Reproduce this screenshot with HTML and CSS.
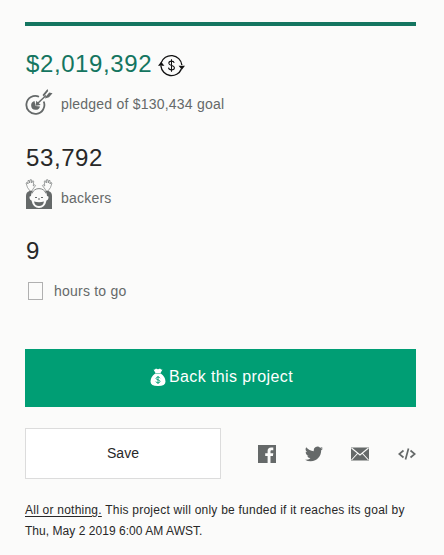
FILE: index.html
```html
<!DOCTYPE html>
<html lang="en">
<head>
    <meta charset="UTF-8">
    <meta name="viewport" content="width=device-width, initial-scale=1.0">
    <title>Back this project</title>
    <link rel="stylesheet" href="styles.css">
</head>
<body>
    <div class="container">
        <div class="progress-bar"></div>

        <div class="stat">
            <div class="stat-value pledged">
                <span>$2,019,392</span>
                <svg class="convert-icon" viewBox="0 0 26 24">
                    <path d="M3 9.500A10.300 10.300 0 0 1 23 11.500M22.500 15.500A10.300 10.300 0 0 1 2.800 12.500" fill="none" stroke="#111" stroke-width="1.300"/>
                    <path d="M0 12.300L3 8.500l3.200 3.800zM19.800 12.200H26l-3 3.800z" fill="#111"/>
                    <path d="M15.600 9.500C15.300 8.300 14.400 7.800 13 7.800c-1.500 0-2.600.7-2.600 2 0 2.800 5.400 1.400 5.400 4.300 0 1.400-1.200 2.100-2.800 2.100s-2.700-.8-2.900-2.100M13 6v12" fill="none" stroke="#111" stroke-width="1"/>
                </svg>
            </div>
            <div class="stat-label">
                <svg class="target-icon" viewBox="0 0 28 28">
                    <path d="M14 8.700A9 9 0 1 0 18.700 13.500" fill="none" stroke="#656969" stroke-width="1.800"/>
                    <path d="M12 16l9-8.500" fill="none" stroke="#656969" stroke-width="1.500"/>
                    <path d="M17.500 7L22.500 1l.7 2-4.400 5.500zM20.500 9l3.700-4.500 3.300.7-3.500 4-4 1.300z" fill="#656969"/>
                    <path d="M9.500 13a4.500 4.500 0 1 0 5.500 5.500l-4.500-.5z" fill="#656969"/>
                    <path d="M10.500 17.700l.8-5 4.400 4.300z" fill="#656969"/>
                </svg>
                <span>pledged of $130,434 goal</span>
            </div>
        </div>

        <div class="stat">
            <div class="stat-value">53,792</div>
            <div class="stat-label">
                <svg class="person-icon" viewBox="0 0 28 30">
                    <path d="M1 30V17q0-4 3.500-5h19q3.500 1 3.500 5v13z" fill="#656969"/>
                    <path d="M5 12L2.500 8.500 1 4l1.200-.5L3 5V1.500h1.200L4.700 4 5.200.700h1.200L6.700 4l1-2.300 1 .5L8.300 7l1.500-1.300.7 1L8 10l-1 2zM23 12l2.500-3.500L27 4l-1.200-.5L25 5V1.500h-1.200L23.300 4 22.800.700h-1.200L21.300 4l-1-2.300-1 .5.4 4.800-1.500-1.300-.7 1L20 10l1 2z" fill="#fbfbfa" stroke="#656969" stroke-width=".6"/>
                    <path d="M6 17q0-7 8-7t8 7q2 0 1.500 2t-2 2.500Q20 29 14 29T6.500 21.500q-1.500-.5-2-2.500T6 17z" fill="#fbfbfa"/>
                    <path d="M7 14.500Q9 9.600 14 9.600t7 4.900" fill="none" stroke="#656969" stroke-width=".8"/>
                    <path d="M9 22.500q5 1.300 10 0-.8 4.500-5 4.500t-5-4.500z" fill="#656969"/>
                    <path d="M10 18.500h2M16 18.500h2M14 19v2" stroke="#656969" stroke-width="1"/>
                </svg>
                <span>backers</span>
            </div>
        </div>

        <div class="stat">
            <div class="stat-value">9</div>
            <div class="stat-label hours">
                <span class="missing-icon"></span>
                <span>hours to go</span>
            </div>
        </div>

        <button class="back-btn">
            <svg class="bag-icon" viewBox="0 0 16 18">
                <path d="M3.500 1.500Q5 2 6 .500q2 1.500 4 0 1 1.500 2.500 1L10.500 5h-5zM5.200 5.500h5.600Q15.500 9 15.500 13.500 15.500 18 8 18T.5 13.500Q.5 9 5.200 5.500z" fill="#fff"/>
                <path d="M10 10.200Q9.500 9 8 9T6 10.300q0 1.200 2 1.500t2 1.600Q10 14.800 8 14.800T5.900 13.500M8 8v8" fill="none" stroke="#009e74" stroke-width=".9"/>
            </svg>
            <span>Back this project</span>
        </button>

        <div class="actions">
            <button class="save-btn">Save</button>
            <div class="share">
                <svg viewBox="0 0 18 18">
                    <path d="M0 0h18v18h-5.500v-7h2.400l.4-2.800h-2.800V6.500c0-.9.300-1.300 1.300-1.300h1.500V2.600h-2.200c-2.400 0-3.500 1.400-3.500 3.500v2.100H7.200V11h2.400v7H0z"/>
                </svg>
                <svg viewBox="0 0 24 24">
                    <path d="M23.950 4.570a10 10 0 0 1-2.820.770 4.960 4.960 0 0 0 2.160-2.720c-.950.550-2 .950-3.130 1.180a4.920 4.920 0 0 0-8.380 4.480C7.690 8.100 4.070 6.130 1.640 3.160a4.920 4.920 0 0 0 1.520 6.570 4.900 4.900 0 0 1-2.230-.610v.060a4.920 4.920 0 0 0 3.950 4.830 5 5 0 0 1-2.210.080 4.940 4.940 0 0 0 4.600 3.420A9.870 9.870 0 0 1 0 19.540a14 14 0 0 0 7.550 2.210c9.050 0 14-7.500 14-13.980l-.02-.640a9.940 9.940 0 0 0 2.420-2.560z"/>
                </svg>
                <svg viewBox="0 0 18 18">
                    <path d="M0 2.500h18v13H0z"/>
                    <path d="M.5 3l8.500 7 8.500-7M.5 15L6.500 8.500M17.500 15l-6-6.500" fill="none" stroke="#fbfbfa" stroke-width="1.100"/>
                </svg>
                <svg viewBox="0 0 18 18">
                    <path d="M5.500 5.500L1.200 9l4.300 3.500M12.500 5.500L16.800 9l-4.300 3.500M10.500 3.500l-3 11" fill="none" stroke="#656969" stroke-width="1.700"/>
                </svg>
            </div>
        </div>

        <p class="note"><a class="note-link">All or nothing.</a> This project will only be funded if it reaches its goal by<br><span class="deadline">Thu, May 2 2019 6:00 AM AWST.</span></p>
    </div>
</body>
</html>
```
FILE: styles.css
```css
* {
    margin: 0;
    padding: 0;
    box-sizing: border-box;
}

body {
    font-family: 'Liberation Sans', Arial, sans-serif;
    background-color: #fbfbfa;
    color: #282828;
}

.container {
    width: 416px;
    padding: 22px 0 0 25px;
}

.progress-bar {
    height: 4px;
    margin-bottom: 22px;
    background-color: #147560;
}

.stat {
    height: 93.5px;
}

.stat-value {
    display: flex;
    align-items: center;
    height: 32px;
    padding-left: 1px;
    font-size: 24px;
    letter-spacing: 0.6px;
}

.stat-value.pledged {
    color: #147560;
}

.convert-icon {
    width: 27px;
    height: 25px;
    margin: 2px 0 0 6px;
}

.stat-label {
    display: flex;
    align-items: center;
    gap: 8px;
    height: 32px;
    margin-top: 8px;
    color: #656969;
    font-size: 14px;
    letter-spacing: 0.22px;
}

.target-icon {
    width: 28px;
    height: 28px;
    margin-top: -4px;
}

.person-icon {
    width: 28px;
    height: 30px;
    margin-top: -7px;
}

.missing-icon {
    width: 15px;
    height: 18px;
    margin-left: 3px;
    border: 1px solid #b0b0b0;
}

.hours {
    gap: 11px;
}

.back-btn {
    display: flex;
    justify-content: center;
    align-items: center;
    gap: 3px;
    width: 100%;
    height: 58px;
    margin-top: 20px;
    padding: 0 0 2px 2px;
    border: none;
    background-color: #009e74;
    color: white;
    font-family: inherit;
    font-size: 16px;
    letter-spacing: 0.4px;
}

.bag-icon {
    width: 16px;
    height: 18px;
}

.actions {
    display: flex;
    align-items: center;
    margin-top: 21px;
}

.save-btn {
    width: 196px;
    height: 51px;
    border: 1px solid #dcdcdc;
    background-color: white;
    color: #282828;
    font-family: inherit;
    font-size: 14px;
}

.share {
    display: flex;
    flex-grow: 1;
    justify-content: space-between;
    padding-left: 37px;
}

.share svg {
    width: 18px;
    height: 18px;
    margin-top: 1px;
    fill: #656969;
}

.note {
    margin-top: 21px;
    font-size: 12px;
    letter-spacing: 0.23px;
    line-height: 21px;
    white-space: nowrap;
}

.note-link {
    text-decoration: underline;
    text-underline-offset: 2px;
}

.deadline {
    letter-spacing: 0.04px;
}
```
